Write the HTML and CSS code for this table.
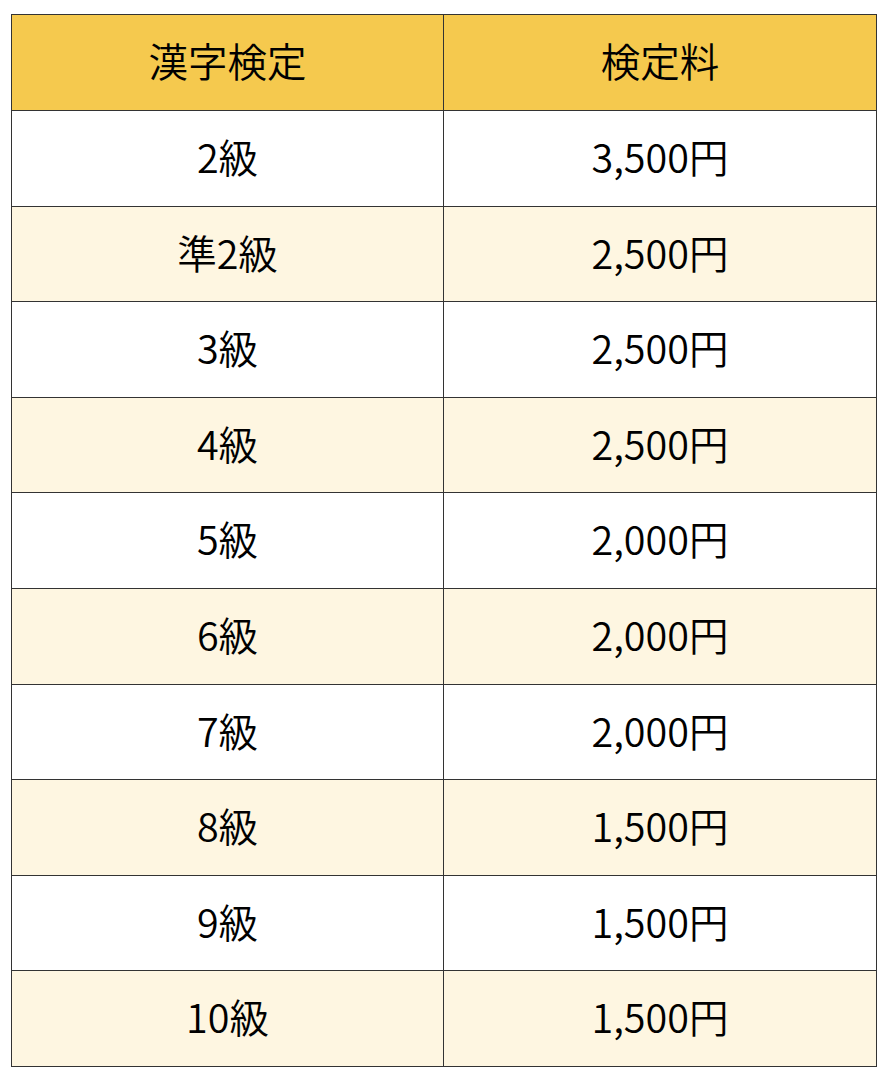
FILE: index.html
```html
<!DOCTYPE html>
<html lang="ja">
<head>
<meta charset="utf-8">
<link rel="stylesheet" href="styles.css">
</head>
<body>
<div class="wrap">
<table class="fees">
<colgroup><col class="c1"><col class="c2"></colgroup>
<thead>
<tr><th>漢字検定</th><th>検定料</th></tr>
</thead>
<tbody>
<tr><td>2級</td><td>3,500円</td></tr>
<tr class="alt"><td>準2級</td><td>2,500円</td></tr>
<tr><td>3級</td><td>2,500円</td></tr>
<tr class="alt"><td>4級</td><td>2,500円</td></tr>
<tr><td>5級</td><td>2,000円</td></tr>
<tr class="alt"><td>6級</td><td>2,000円</td></tr>
<tr><td>7級</td><td>2,000円</td></tr>
<tr class="alt"><td>8級</td><td>1,500円</td></tr>
<tr><td>9級</td><td>1,500円</td></tr>
<tr class="alt"><td>10級</td><td>1,500円</td></tr>
</tbody>
</table>
</div>
</body>
</html>
```
FILE: styles.css
```css
html, body {
  margin: 0;
  padding: 0;
  background: #ffffff;
}
.wrap {
  padding: 14px 8px 0 11px;
}
.fees {
  width: 866px;
  border-collapse: collapse;
  table-layout: fixed;
  font-family: "Noto Sans CJK JP", "Noto Sans", sans-serif;
  font-size: 39.5px;
  color: #000;
}
.fees .c1 {
  width: 432px;
}
.fees th, .fees td {
  border: 1px solid #333;
  text-align: center;
  vertical-align: middle;
  padding: 0 0 5px 0;
  font-weight: 350;
  line-height: 1;
  height: 89.6px;
}
.fees th {
  background: #f5c94e;
  height: 90px;
}
.fees tr.alt td {
  background: #fef6e1;
}
```
